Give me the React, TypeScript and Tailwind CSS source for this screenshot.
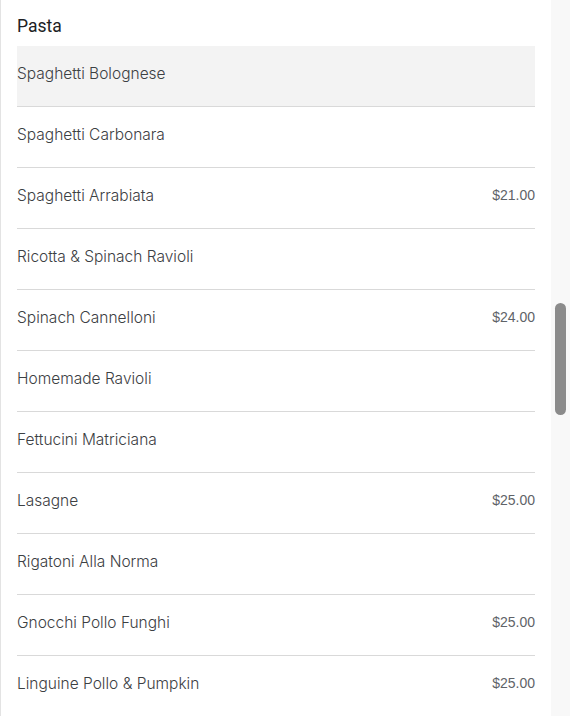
import React from 'react';

type Dish = { name: string; price?: string };

const dishes: Dish[] = [
  { name: 'Spaghetti Bolognese' },
  { name: 'Spaghetti Carbonara' },
  { name: 'Spaghetti Arrabiata', price: '$21.00' },
  { name: 'Ricotta & Spinach Ravioli' },
  { name: 'Spinach Cannelloni', price: '$24.00' },
  { name: 'Homemade Ravioli' },
  { name: 'Fettucini Matriciana' },
  { name: 'Lasagne', price: '$25.00' },
  { name: 'Rigatoni Alla Norma' },
  { name: 'Gnocchi Pollo Funghi', price: '$25.00' },
  { name: 'Linguine Pollo & Pumpkin', price: '$25.00' },
];

const App = () => {
  return (
    <div className="flex h-[716px] w-[570px] overflow-hidden bg-white">
      <div className="flex-1 border-l border-[#e3e3e3] pl-[16px] pr-[16px]">
        <h2 className="pt-[14px] pb-[8px] font-['Roboto',sans-serif] text-[17.5px] leading-[24px] text-[#202124]">
          Pasta
        </h2>
        <ul>
          {dishes.map((dish, i) => (
            <li
              key={dish.name}
              className={`flex h-[61px] items-start justify-between border-b border-[#d9d9d9] pt-[18px] ${
                i === 0 ? 'bg-[#f3f3f3]' : ''
              }`}
            >
              <span className="font-['Inter',sans-serif] text-[15.5px] font-light leading-[20px] text-[#3c4043]">
                {dish.name}
              </span>
              {dish.price && (
                <span className="-mt-px font-['Liberation_Sans',Arial,sans-serif] text-[14px] leading-[20px] text-[#5f6368]">
                  {dish.price}
                </span>
              )}
            </li>
          ))}
        </ul>
      </div>
      <div className="w-[19px] shrink-0 bg-[#f8f8f8] pt-[303px] pl-[4px]">
        <div className="h-[112px] w-[11px] rounded-full bg-[#8b8b8b]" />
      </div>
    </div>
  );
};

export default App;
